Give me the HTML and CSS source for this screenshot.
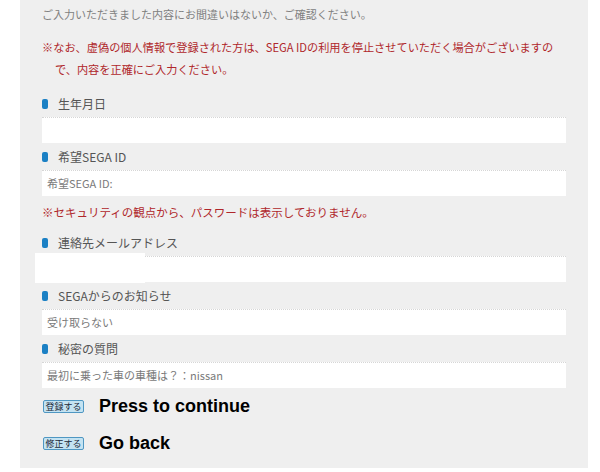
FILE: index.html
```html
<!DOCTYPE html>
<html>
<head>
    <title>SEGA ID 登録内容確認</title>
    <link rel="stylesheet" href="styles.css">
</head>
<body>
    <div class="panel">
        <p class="lead">ご入力いただきました内容にお間違いはないか、ご確認ください。</p>
        <p class="warn">※なお、虚偽の個人情報で登録された方は、SEGA IDの利用を停止させていただく場合がございますので、内容を正確にご入力ください。</p>

        <h3 class="field-label"><span class="mark"></span>生年月日</h3>
        <div class="field"></div>

        <h3 class="field-label"><span class="mark"></span>希望SEGA ID</h3>
        <div class="field">希望SEGA ID:</div>
        <p class="note">※セキュリティの観点から、パスワードは表示しておりません。</p>

        <h3 class="field-label"><span class="mark"></span>連絡先メールアドレス</h3>
        <div class="field field-masked"><span class="mask"></span></div>

        <h3 class="field-label"><span class="mark"></span>SEGAからのお知らせ</h3>
        <div class="field">受け取らない</div>

        <h3 class="field-label"><span class="mark"></span>秘密の質問</h3>
        <div class="field">最初に乗った車の車種は？：nissan</div>

        <div class="action">
            <button class="btn">登録する</button>
            <span class="action-text">Press to continue</span>
        </div>
        <div class="action">
            <button class="btn">修正する</button>
            <span class="action-text">Go back</span>
        </div>
    </div>
</body>
</html>
```

FILE: styles.css
```css
body {
    margin: 0;
    background-color: #fff;
    font-family: "Noto Sans CJK JP", "Liberation Sans", sans-serif;
}

.panel {
    width: 524px;
    height: 464px;
    margin-left: 20px;
    padding: 4px 22px 0 22px;
    box-sizing: content-box;
    background-color: #efefef;
}

.lead {
    margin: 0;
    font-size: 11px;
    line-height: 20px;
    color: #808080;
}

.warn {
    margin: 12px 0 10px 0;
    padding-left: 13px;
    text-indent: -13px;
    font-size: 11.2px;
    line-height: 22px;
    color: #b0272b;
}

.field-label {
    display: flex;
    align-items: center;
    gap: 10px;
    margin: 0;
    height: 27px;
    font-size: 12px;
    font-weight: normal;
    color: #555;
}

.mark {
    width: 6px;
    height: 10px;
    border-radius: 2px;
    background-color: #1b80c4;
}

.field {
    position: relative;
    height: 25px;
    line-height: 25px;
    padding-left: 5px;
    background-color: #fff;
    border-top: 1px dotted #d6d6d6;
    font-size: 11px;
    color: #7a7a7a;
}

.mask {
    position: absolute;
    left: -7px;
    top: -4px;
    width: 110px;
    height: 30px;
    background-color: #fff;
}

.note {
    margin: 0;
    height: 33px;
    line-height: 33px;
    font-size: 11.5px;
    color: #b0272b;
}

.action {
    display: flex;
    align-items: center;
    gap: 15px;
    height: 26px;
    margin-top: 5px;
}

.action + .action {
    margin-top: 11px;
}

.btn {
    width: 41px;
    height: 13px;
    margin-left: 1px;
    padding: 0;
    border: 1px solid #4f97c2;
    border-radius: 2px;
    background-color: #c4e3f2;
    font-family: "Noto Sans CJK JP", sans-serif;
    font-size: 9px;
    line-height: 11px;
    color: #1c2a3a;
}

.action-text {
    font-family: "Liberation Sans", Arial, sans-serif;
    font-weight: bold;
    font-size: 18px;
    color: #000;
}
```
